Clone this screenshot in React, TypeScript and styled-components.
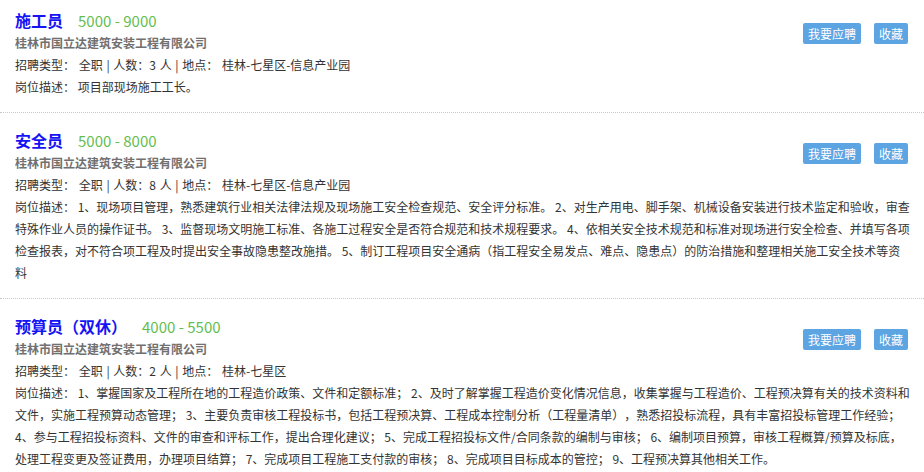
import styled, { createGlobalStyle } from "styled-components";

const GlobalStyle = createGlobalStyle`
  body {
    margin: 0;
    background: #ffffff;
    font-family: "Noto Sans CJK SC", "Liberation Sans", sans-serif;
  }
`

const JobList = styled.ul`
  list-style: none;
  margin: 0;
  padding: 0;
  width: 924px;
`

const JobItem = styled.li`
  padding: 15px 11px 14px 15px;
  border-bottom: 1px dotted #c8c8c8;

  &:first-child {
    padding-top: 8px;
  }
`

const Actions = styled.div`
  float: right;
  display: flex;
  gap: 13px;
  margin-top: 15px;
  margin-right: 5px;
`

const ActionButton = styled.button`
  height: 21px;
  padding: 0 5px;
  border: none;
  border-radius: 2px;
  background-color: #5ca4e2;
  color: #ffffff;
  font-family: inherit;
  font-size: 12px;
  line-height: 21px;
  cursor: pointer;
`

const TitleRow = styled.div`
  height: 24px;
  line-height: 24px;
  display: flex;
  align-items: baseline;
  gap: 15px;
`

const JobName = styled.a`
  color: #1414f5;
  font-size: 16px;
  font-weight: bold;
  text-decoration: none;
`

const Salary = styled.span`
  color: #63bd4f;
  font-size: 15px;
`

const Company = styled.div`
  color: #707070;
  font-size: 12px;
  font-weight: bold;
  line-height: 22px;
`

const InfoLine = styled.div`
  color: #333333;
  font-size: 12px;
  line-height: 22px;
  word-spacing: 1px;
`

const Desc = styled.div`
  color: #333333;
  font-size: 12px;
  line-height: 22px;
  white-space: nowrap;
  text-spacing-trim: space-all;
`

type Job = {
  name: string
  salary: string
  count: number
  place: string
  desc: string[]
}

// lines broken where the site breaks them
const jobs: Job[] = [
  {
    name: "施工员",
    salary: "5000 - 9000",
    count: 3,
    place: "桂林-七星区-信息产业园",
    desc: ["项目部现场施工工长。"],
  },
  {
    name: "安全员",
    salary: "5000 - 8000",
    count: 8,
    place: "桂林-七星区-信息产业园",
    desc: [
      "1、现场项目管理，熟悉建筑行业相关法律法规及现场施工安全检查规范、安全评分标准。 2、对生产用电、脚手架、机械设备安装进行技术监定和验收，审查",
      "特殊作业人员的操作证书。 3、监督现场文明施工标准、各施工过程安全是否符合规范和技术规程要求。 4、依相关安全技术规范和标准对现场进行安全检查、并填写各项",
      "检查报表，对不符合项工程及时提出安全事故隐患整改施措。 5、制订工程项目安全通病（指工程安全易发点、难点、隐患点）的防治措施和整理相关施工安全技术等资",
      "料",
    ],
  },
  {
    name: "预算员（双休）",
    salary: "4000 - 5500",
    count: 2,
    place: "桂林-七星区",
    desc: [
      "1、掌握国家及工程所在地的工程造价政策、文件和定额标准； 2、及时了解掌握工程造价变化情况信息，收集掌握与工程造价、工程预决算有关的技术资料和",
      "文件，实施工程预算动态管理； 3、主要负责审核工程投标书，包括工程预决算、工程成本控制分析（工程量清单），熟悉招投标流程，具有丰富招投标管理工作经验；",
      "4、参与工程招投标资料、文件的审查和评标工作，提出合理化建议； 5、完成工程招投标文件/合同条款的编制与审核； 6、编制项目预算，审核工程概算/预算及标底，",
      "处理工程变更及签证费用，办理项目结算； 7、完成项目工程施工支付款的审核； 8、完成项目目标成本的管控； 9、工程预决算其他相关工作。",
    ],
  },
]

export default function App() {
  return (
    <>
      <GlobalStyle />
      <JobList>
        {jobs.map((job) => (
          <JobItem key={job.name}>
            <Actions>
              <ActionButton>我要应聘</ActionButton>
              <ActionButton>收藏</ActionButton>
            </Actions>
            <TitleRow>
              <JobName href="#">{job.name}</JobName>
              <Salary>{job.salary}</Salary>
            </TitleRow>
            <Company>桂林市国立达建筑安装工程有限公司</Company>
            <InfoLine>
              招聘类型： 全职 | 人数：{job.count} 人 | 地点： {job.place}
            </InfoLine>
            {job.desc.map((line, i) => (
              <Desc key={i}>
                {i === 0 ? "岗位描述： " : ""}
                {line}
              </Desc>
            ))}
          </JobItem>
        ))}
      </JobList>
    </>
  );
}
